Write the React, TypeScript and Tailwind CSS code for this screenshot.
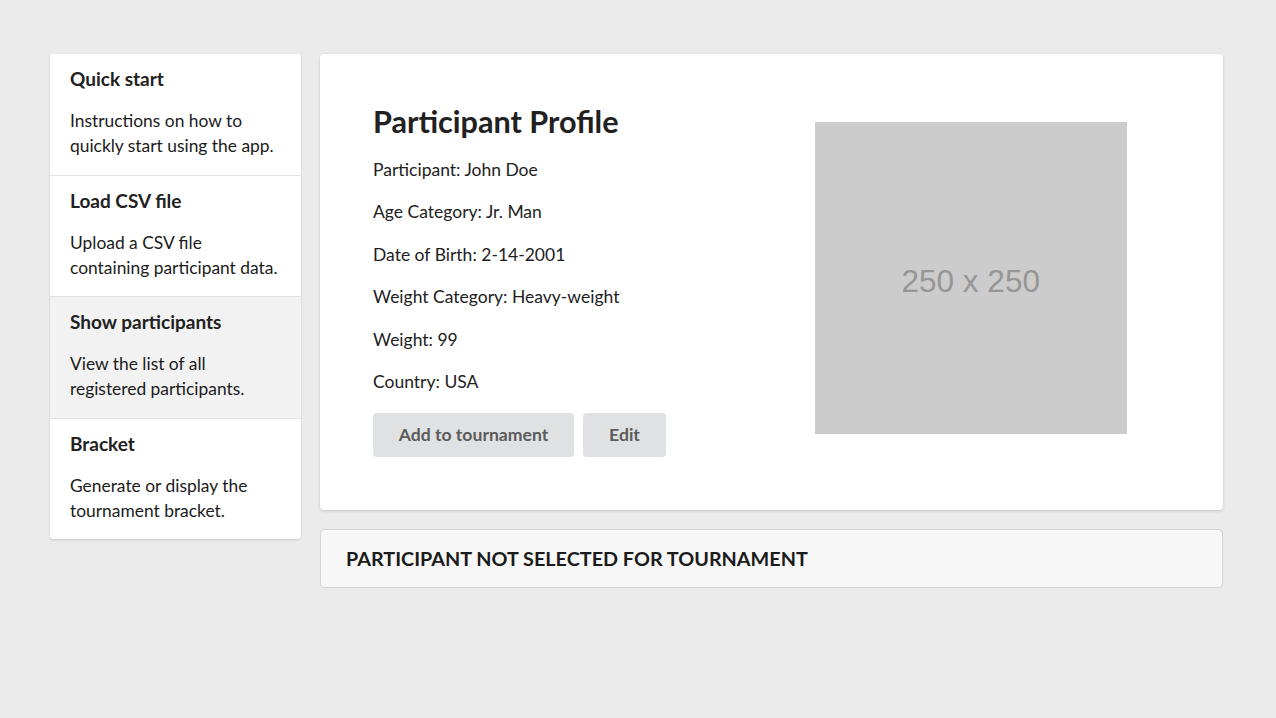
import { useState } from 'react';

const menuItems = [
  { title: 'Quick start', text: 'Instructions on how to quickly start using the app.' },
  { title: 'Load CSV file', text: 'Upload a CSV file containing participant data.' },
  { title: 'Show participants', text: 'View the list of all registered participants.' },
  { title: 'Bracket', text: 'Generate or display the tournament bracket.' },
];

const details = [
  ['Participant', 'John Doe'],
  ['Age Category', 'Jr. Man'],
  ['Date of Birth', '2-14-2001'],
  ['Weight Category', 'Heavy-weight'],
  ['Weight', '99'],
  ['Country', 'USA'],
];

export default function App() {
  const [active, setActive] = useState(2);

  return (
    <div className="min-h-screen bg-[#ebebeb] font-['Lato','Noto_Sans',sans-serif] text-[#212121]">
      <div className="flex items-start gap-[19px] pl-[50px] pr-[53px] pt-[54px]">
        {/* side menu */}
        <div className="w-[251px] shrink-0 overflow-hidden rounded-[4px] bg-white shadow-[0_1px_2px_0_rgba(34,36,38,0.2)]">
          {menuItems.map((item, i) => (
            <div
              key={item.title}
              onClick={() => setActive(i)}
              className={`cursor-pointer px-5 pt-[14px] pb-[16.5px] ${i > 0 ? 'border-t border-[#e3e3e4]' : ''} ${active === i ? 'bg-[#f2f2f2]' : 'bg-white'}`}
            >
              <div className="text-[19px] leading-[22px] font-bold text-[#212121]">{item.title}</div>
              <p className="mt-[18px] text-[17.4px] leading-[25px] text-[#1b1b1b]">{item.text}</p>
            </div>
          ))}
        </div>

        <div className="flex flex-1 flex-col gap-[19px]">
          {/* profile card */}
          <div className="grid grid-cols-2 rounded-[4px] bg-white px-[53px] pt-[50px] pb-[53px] shadow-[0_1px_3px_0_rgba(34,36,38,0.2)]">
            <div>
              <h1 className="text-[30.6px] leading-[36px] font-bold text-[#212121]">Participant Profile</h1>
              <div className="mt-[17px] flex flex-col gap-[17.4px]">
                {details.map(([label, value]) => (
                  <p key={label} className="text-[17.5px] leading-[25px]">
                    {label}: {value}
                  </p>
                ))}
              </div>
              <div className="mt-[19.5px] flex gap-[9px]">
                <button className="h-[44px] w-[201px] rounded-[4px] bg-[#e0e1e2] text-[17.6px] font-bold text-[#5b5b5b]">
                  Add to tournament
                </button>
                <button className="h-[44px] w-[83px] rounded-[4px] bg-[#e0e1e2] text-[17.6px] font-bold text-[#5b5b5b]">
                  Edit
                </button>
              </div>
            </div>
            <div className="flex justify-center pt-[18px]">
              <div className="flex h-[312px] w-[312px] items-center justify-center bg-[#cccccc] pt-[8px] font-['Liberation_Sans',Arial,sans-serif] text-[31.5px] text-[#969696]">
                250 x 250
              </div>
            </div>
          </div>

          {/* status segment */}
          <div className="flex h-[59px] items-center rounded-[4px] border border-[#d4d4d5] bg-[#f7f7f7] px-[25px]">
            <span className="text-[19.8px] font-bold text-[#1b1b1b]">PARTICIPANT NOT SELECTED FOR TOURNAMENT</span>
          </div>
        </div>
      </div>
    </div>
  );
}
